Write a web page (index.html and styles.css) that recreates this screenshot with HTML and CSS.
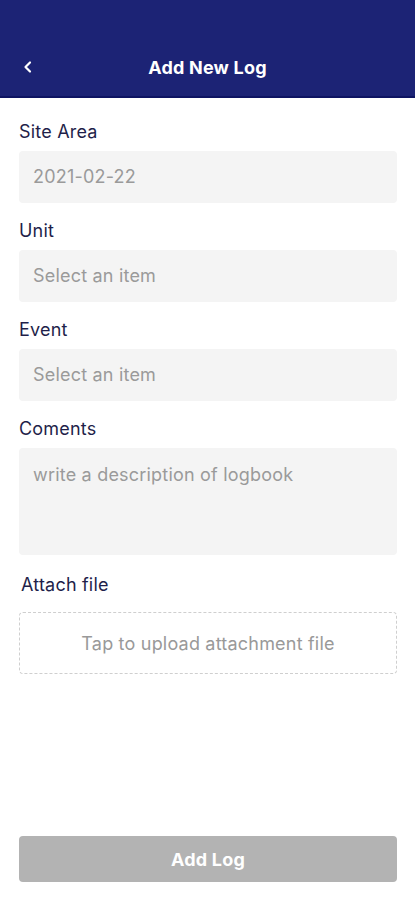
FILE: index.html
```html
<!DOCTYPE html>
<html lang="en">
<head>
<meta charset="utf-8">
<title>Add New Log</title>
<link rel="stylesheet" href="styles.css">
</head>
<body>
<div class="screen">
  <header class="appbar">
    <button class="back" aria-label="Back">
      <svg width="12" height="14" viewBox="0 0 12 14"><path d="M8 2.5 L3.5 7 L8 11.5" fill="none" stroke="#fff" stroke-width="2.2" stroke-linecap="round" stroke-linejoin="round"/></svg>
    </button>
    <h1 class="title">Add New Log</h1>
  </header>
  <main class="form">
    <div class="field">
      <label class="label">Site Area</label>
      <div class="input">2021-02-22</div>
    </div>
    <div class="field">
      <label class="label">Unit</label>
      <div class="input">Select an item</div>
    </div>
    <div class="field">
      <label class="label">Event</label>
      <div class="input">Select an item</div>
    </div>
    <div class="field">
      <label class="label">Coments</label>
      <div class="input textarea">write a description of logbook</div>
    </div>
    <div class="field attach">
      <label class="label">Attach file</label>
      <div class="upload">Tap to upload attachment file</div>
    </div>
  </main>
  <footer class="actions">
    <button class="submit">Add Log</button>
  </footer>
</div>
</body>
</html>
```
FILE: styles.css
```css
* { box-sizing: border-box; }
html, body { margin: 0; padding: 0; background: #fff; }
body { font-family: Inter, "Noto Sans", sans-serif; letter-spacing: 0.2px; }
.screen { width: 415px; height: 900px; display: flex; flex-direction: column; }
.appbar {
  height: 98px;
  background: #1c2375;
  border-bottom: 2px solid #0e1462;
  display: flex;
  align-items: flex-end;
  padding: 0 0 17px 0;
  position: relative;
}
.back {
  position: absolute;
  left: 22px;
  bottom: 22px;
  background: none;
  border: 0;
  padding: 0;
  width: 12px;
  height: 14px;
  display: flex;
}
.title {
  margin: 0;
  width: 100%;
  text-align: center;
  color: #fff;
  font-size: 18px;
  font-weight: 700;
  line-height: 22px;
}
.form { padding: 24px 18px 0 19px; display: flex; flex-direction: column; gap: 18px; }
.field { display: flex; flex-direction: column; gap: 9px; }
.label { color: #1f1f4a; font-size: 18px; line-height: 20px; }
.input {
  height: 52px;
  background: #f4f4f4;
  border-radius: 4px;
  color: #9a9a9a;
  font-size: 18px;
  line-height: 20px;
  padding: 16px 14px;
}
.textarea { height: 107px; padding-top: 17px; }
.attach { margin-top: 2px; gap: 17px; }
.attach .label { padding-left: 2px; }
.upload {
  height: 62px;
  border: 1.5px dashed #cfcfcf;
  border-radius: 4px;
  color: #999;
  font-size: 18px;
  display: flex;
  align-items: center;
  justify-content: center;
}
.actions { margin-top: auto; padding: 0 18px 18px 19px; }
.submit {
  width: 100%;
  height: 46px;
  border: 0;
  border-radius: 4px;
  background: #b3b3b3;
  color: #fff;
  font-family: Inter, "Noto Sans", sans-serif;
  letter-spacing: 0.2px;
  font-size: 18px;
  font-weight: 700;
}
```
